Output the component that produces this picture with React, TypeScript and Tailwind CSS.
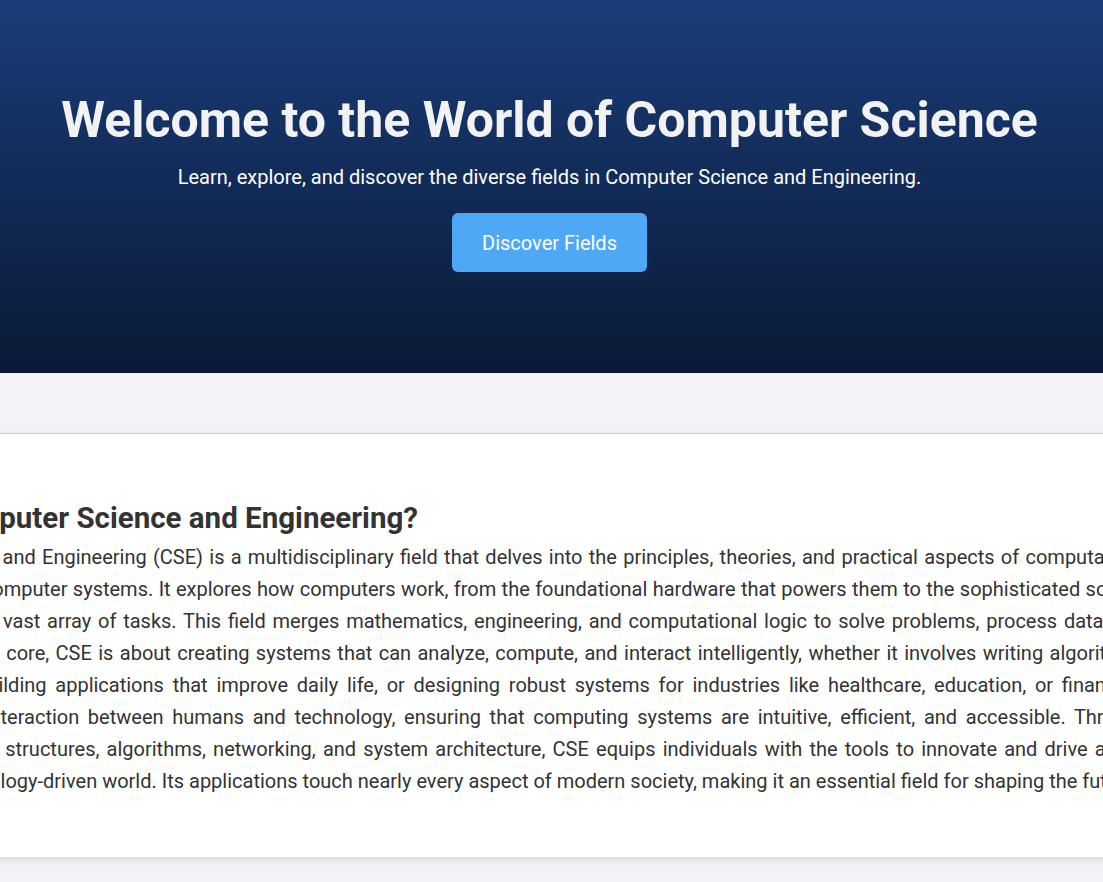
import React from 'react'

// paragraph is justified line by line so the wrap points match the design
const lines = [
  'Computer Science and Engineering (CSE) is a multidisciplinary field that delves into the principles, theories, and practical aspects of computation and hardware',
  'and the study of computer systems. It explores how computers work, from the foundational hardware that powers them to the sophisticated software that allows',
  'them to execute a vast array of tasks. This field merges mathematics, engineering, and computational logic to solve problems, process data, and develop new',
  'applications. At its core, CSE is about creating systems that can analyze, compute, and interact intelligently, whether it involves writing algorithms, constructing',
  'software tools, building applications that improve daily life, or designing robust systems for industries like healthcare, education, or finance. The field also',
  'emphasizes the interaction between humans and technology, ensuring that computing systems are intuitive, efficient, and accessible. Through a firm, solid',
  'knowledge in data structures, algorithms, networking, and system architecture, CSE equips individuals with the tools to innovate and drive advancement amid',
]
const lastLine =
  'the existing technology-driven world. Its applications touch nearly every aspect of modern society, making it an essential field for shaping the future.'

export default function App() {
  return (
    <div className="min-h-screen overflow-hidden bg-[#f2f2f7] font-['Roboto',sans-serif]">
      {/* Hero */}
      <header className="h-[373px] bg-gradient-to-b from-[#1a3d7a] to-[#0a1a37] flex flex-col items-center pt-[90px] pr-[4px] text-center">
        <h1 className="text-[50px] leading-[60px] font-bold text-[#f2f2f2]">
          Welcome to the World of Computer Science
        </h1>
        <p className="mt-[13px] text-[20px] leading-[28px] text-white">
          Learn, explore, and discover the diverse fields in Computer Science and Engineering.
        </p>
        <button className="mt-[22px] w-[195px] h-[59px] rounded-[6px] bg-[#4ea8f5] text-white text-[20px]">
          Discover Fields
        </button>
      </header>

      {/* About */}
      <section className="pt-[60px] pb-[24px]">
        <div className="ml-[-208px] mr-[-204px] px-[40px] pt-[66px] pb-[60px] bg-white border-t border-[#d0d0d6] shadow-[0_3px_6px_rgba(0,0,0,0.12)] text-[#333]">
          <h2 className="text-[29.5px] leading-[36px] font-bold whitespace-nowrap">
            What is Computer Science and Engineering?
          </h2>
          <p className="mt-[5px] text-[20px] leading-[32px]">
            {lines.map((l) => (
              <span key={l} className="block whitespace-nowrap text-justify [text-align-last:justify]">
                {l}
              </span>
            ))}
            <span className="block whitespace-nowrap">{lastLine}</span>
          </p>
        </div>
      </section>
    </div>
  )
}
